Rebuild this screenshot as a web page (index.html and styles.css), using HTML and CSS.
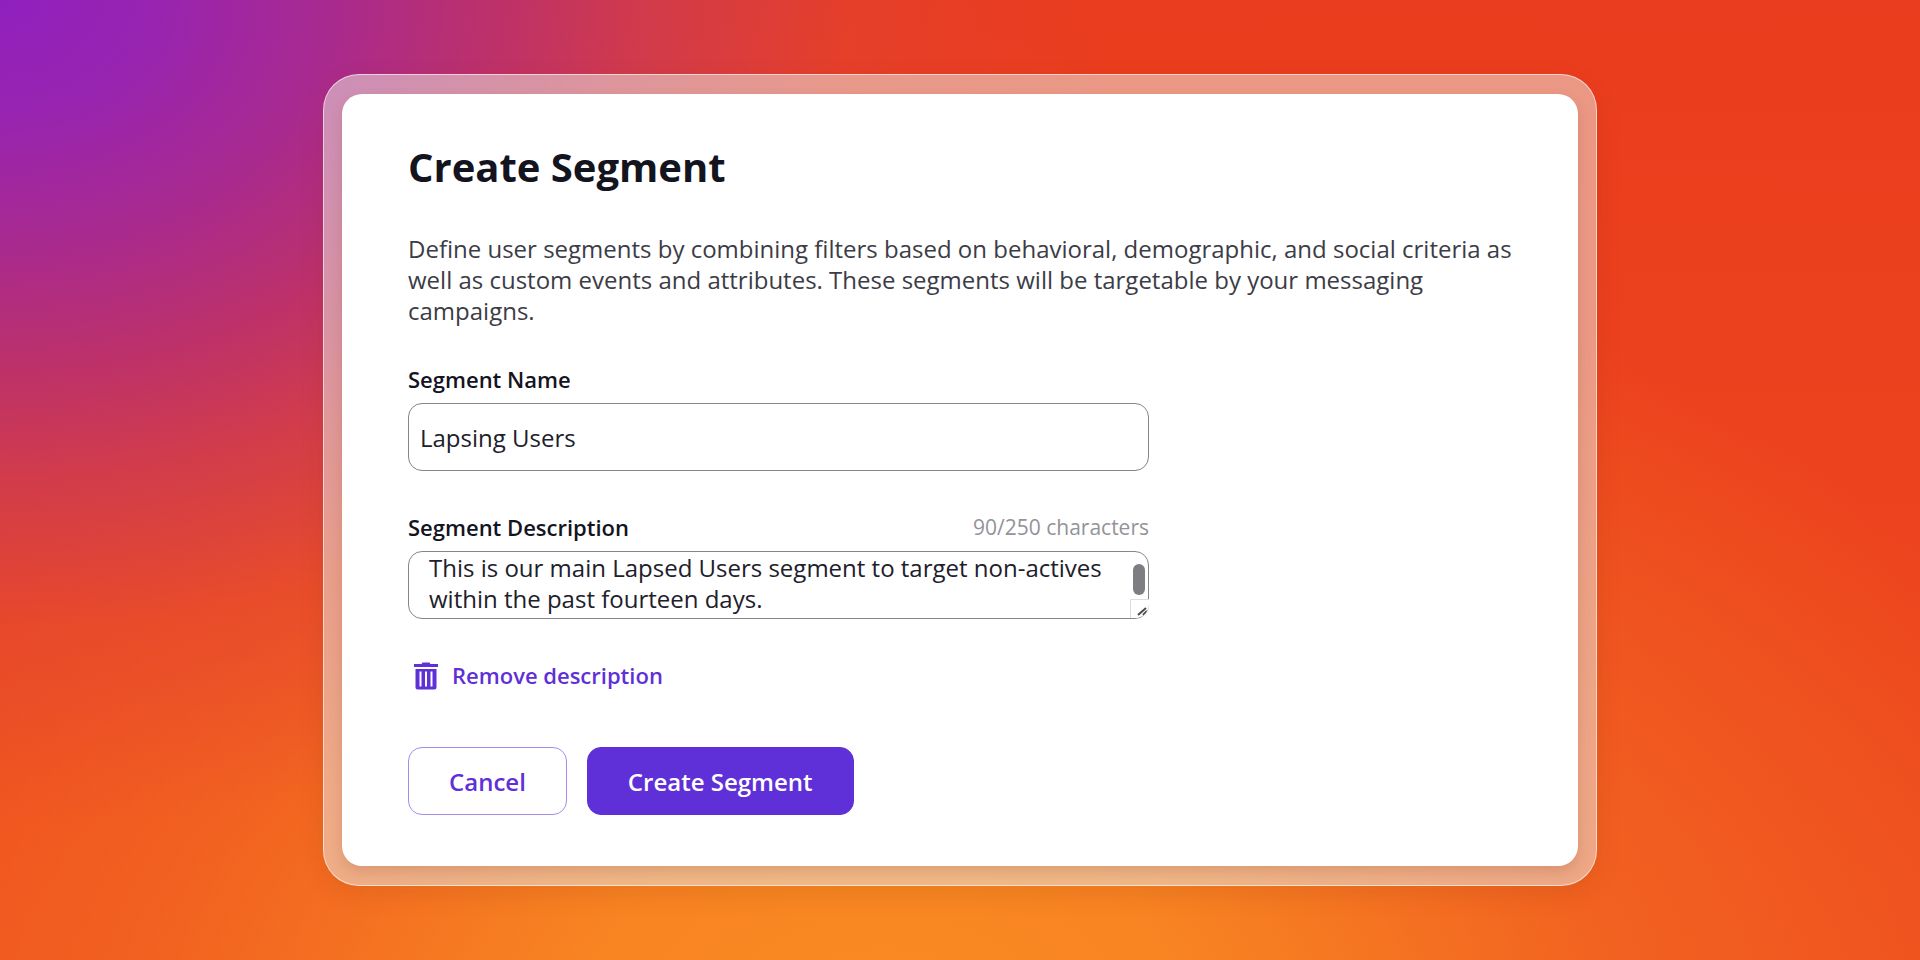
FILE: index.html
```html
<!DOCTYPE html>
<html lang="en">
<head>
<meta charset="UTF-8" />
<meta name="viewport" content="width=device-width, initial-scale=1" />
<title>Create Segment</title>
<link rel="stylesheet" href="styles.css">
</head>
<body>

<main class="frame">
  <form class="card">
    <h1>Create Segment</h1>
    <p class="intro">Define user segments by combining filters based on behavioral, demographic, and social criteria as well as custom events and attributes. These segments will be targetable by your messaging campaigns.</p>

    <div class="field">
      <div class="field-head">
        <label for="segment-name">Segment Name</label>
      </div>
      <input type="text" id="segment-name" value="Lapsing Users" />
    </div>

    <div class="field">
      <div class="field-head">
        <label for="segment-desc">Segment Description</label>
        <span class="counter">90/250 characters</span>
      </div>
      <div class="textarea-wrap">
        <textarea id="segment-desc">This is our main Lapsed Users segment to target non-actives within the past fourteen days.</textarea>
        <span class="scroll-thumb"></span>
        <svg class="grip" viewBox="0 0 19 19" aria-hidden="true">
          <path class="grip-edge" d="M.5 19V.5H19" />
          <path d="M8 16l8-7M13 16l4-4" />
        </svg>
      </div>
    </div>

    <button type="button" class="remove-btn">
      <svg class="trash" viewBox="0 0 26 28" aria-hidden="true">
        <path d="M1 2h7.500l1-1.500h7l1 1.500H25v3H1z" />
        <path fill-rule="evenodd" d="M2.500 7h21v18.500a2 2 0 0 1-2 2h-17a2 2 0 0 1-2-2zM6.500 9.500v15h2v-15zM12 9.500v15h2v-15zM17.500 9.500v15h2v-15z" />
      </svg>
      Remove description
    </button>

    <div class="actions">
      <button type="button" class="btn">Cancel</button>
      <button type="submit" class="btn btn-primary">Create Segment</button>
    </div>
  </form>
</main>

</body>
</html>
```
FILE: styles.css
```css
* {
  box-sizing: border-box;
}
body {
  margin: 0;
  min-height: 100vh;
  display: flex;
  align-items: center;
  justify-content: center;
  font-family: "Open Sans", "Noto Sans", sans-serif;
  font-size: 24px;
  line-height: 31px;
  color: #14141f;
  background:
    radial-gradient(ellipse 58% 86% at 0% 0%, #9020be 0%, #9824b0 14%, #a92a8e 30%, rgba(186,48,110,0.96) 44%, rgba(205,58,82,0.86) 58%, rgba(224,66,54,0.5) 76%, rgba(234,66,34,0) 100%),
    radial-gradient(ellipse 66% 88% at 46% 108%, #fa8c22 0%, rgba(248,134,34,0.95) 26%, rgba(244,112,34,0.62) 58%, rgba(238,78,32,0) 100%),
    linear-gradient(to bottom, #ea3c1e, #ee4a1e);
}
.frame {
  width: 1274px;
  max-width: 100%;
  padding: 19px 18px;
  border: 1px solid rgba(255,255,255,0.6);
  border-radius: 36px;
  background: rgba(235,230,222,0.54);
  box-shadow: 0 8px 24px rgba(120,40,10,0.12);
}
.card {
  padding: 49px 62px 51px 66px;
  border-radius: 20px;
  background: #fff;
  box-shadow: 0 6px 14px rgba(140,60,30,0.2);
}
h1 {
  margin: 0 0 42px;
  font-size: 40px;
  line-height: 48px;
}
.intro {
  margin: 0 0 38px;
  color: #3c3c46;
}
.field {
  width: 741px;
  max-width: 100%;
  margin-bottom: 41px;
}
.field-head {
  display: flex;
  justify-content: space-between;
  margin-bottom: 8px;
}
label {
  font-size: 22px;
  font-weight: 650;
}
.counter {
  font-size: 21px;
  color: #939398;
}
input, textarea {
  display: block;
  width: 100%;
  height: 68px;
  border: 1px solid #85858a;
  border-radius: 14px;
  background: #fff;
  color: #20202b;
  font: inherit;
}
input {
  padding: 0 11px;
}
.textarea-wrap {
  position: relative;
}
textarea {
  padding: 0 20px;
  resize: none;
}
.scroll-thumb {
  position: absolute;
  top: 13px;
  right: 4px;
  width: 12px;
  height: 31px;
  border-radius: 6px;
  background: #7d7d82;
}
.grip {
  position: absolute;
  right: 0;
  bottom: 1px;
  width: 19px;
  height: 19px;
  background: #fff;
  border-bottom-right-radius: 14px;
  fill: none;
  stroke: #4a4a50;
  stroke-width: 2;
}
.grip-edge {
  stroke: #dcdcdf;
  stroke-width: 1;
}
.remove-btn {
  display: flex;
  align-items: center;
  gap: 13px;
  padding: 0 5px;
  border: none;
  background: none;
  color: #5f30d8;
  font: 650 22px/31px "Open Sans", "Noto Sans", sans-serif;
  cursor: pointer;
}
.trash {
  width: 26px;
  height: 28px;
  fill: currentColor;
}
.actions {
  display: flex;
  gap: 20px;
  margin-top: 56px;
}
.btn {
  height: 68px;
  padding: 0 40px;
  border: 1px solid #a78aec;
  border-radius: 14px;
  background: #fff;
  color: #5f30d8;
  font: 650 24px/31px "Open Sans", "Noto Sans", sans-serif;
  cursor: pointer;
}
.btn-primary {
  border-color: #5f30d8;
  background: #5f30d8;
  color: #fff;
}
```
